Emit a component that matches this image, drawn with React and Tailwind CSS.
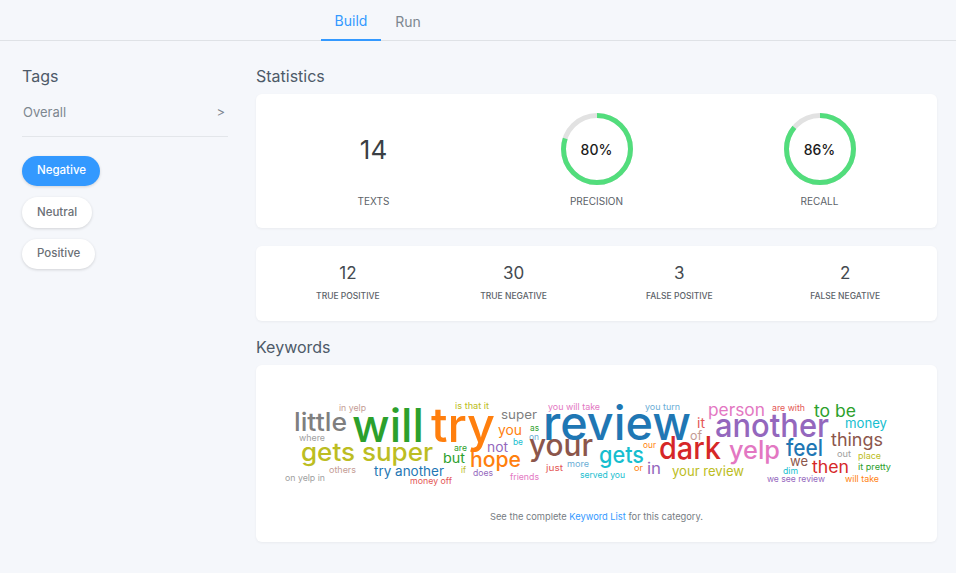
const WORDS = [
  ['little', 294, 431, 25, 53, '#7f7f7f'],
  ['will', 352, 442, 46, 72, '#2ca02c'],
  ['try', 431, 442, 48, 64, '#ff7f0e'],
  ['gets super', 301, 461, 25, 132, '#bcbd22'],
  ['in yelp', 339, 411, 9, 27, '#c49c94'],
  ['is that it', 455, 409, 9, 34, '#bcbd22'],
  ['super', 501, 419, 12.5, 36, '#7f7f7f'],
  ['where', 299, 441, 9, 26, '#a0a0a0'],
  ['you', 498, 435, 14, 24, '#ff7f0e'],
  ['as', 530, 431, 9, 9, '#2ca02c'],
  ['on', 529, 440, 9, 10, '#6baed6'],
  ['be', 513, 445, 9, 10, '#17becf'],
  ['not', 487, 452, 13, 21, '#9467bd'],
  ['are', 454, 451, 9, 13, '#2ca02c'],
  ['but', 443, 463, 13, 22, '#2ca02c'],
  ['hope', 470, 467, 21, 51, '#ff7f0e'],
  ['your', 529, 456, 30, 64, '#8c564b'],
  ['try another', 374, 476, 13, 70, '#1f77b4'],
  ['others', 329, 473, 9, 27, '#c49c94'],
  ['on yelp in', 285, 481, 9, 40, '#a0a0a0'],
  ['money off', 410, 484, 9, 42, '#e45756'],
  ['if', 461, 473, 9, 5, '#bcbd22'],
  ['does', 473, 476, 9, 20, '#9467bd'],
  ['friends', 510, 480, 9, 29, '#e377c2'],
  ['just', 546, 471, 9, 17, '#e45756'],
  ['more', 567, 467, 9, 22, '#6baed6'],
  ['you will take', 548, 410, 9, 52, '#e377c2'],
  ['review', 543, 440, 47, 148, '#1f77b4'],
  ['you turn', 645, 410, 9, 35, '#6baed6'],
  ['person', 708, 416, 17, 57, '#e377c2'],
  ['are with', 772, 411, 9, 33, '#e45756'],
  ['to be', 814, 417, 17, 42, '#2ca02c'],
  ['money', 845, 428, 13.5, 42, '#17becf'],
  ['it', 697, 428, 13, 8, '#e45756'],
  ['another', 715, 437, 33, 114, '#9467bd'],
  ['of', 690, 440, 12, 12, '#c49c94'],
  ['things', 831, 446, 18, 52, '#8c564b'],
  ['our', 643, 448, 9, 13, '#ff7f0e'],
  ['gets', 599, 463, 23, 45, '#17becf'],
  ['dark', 659, 459, 31, 62, '#d62728'],
  ['yelp', 729, 459, 25, 51, '#e377c2'],
  ['feel', 786, 456, 23, 37, '#1f77b4'],
  ['out', 837, 457, 9, 14, '#a0a0a0'],
  ['place', 858, 459, 9, 23, '#bcbd22'],
  ['we', 790, 466, 13, 18, '#8c564b'],
  ['then', 812, 473, 17, 37, '#d62728'],
  ['it pretty', 858, 470, 9, 33, '#2ca02c'],
  ['or', 634, 471, 9, 9, '#ff7f0e'],
  ['in', 647, 474, 16, 14, '#9467bd'],
  ['your review', 672, 476, 13, 72, '#bcbd22'],
  ['dim', 783, 474, 9, 15, '#17becf'],
  ['served you', 580, 478, 9, 45, '#17becf'],
  ['we see review', 767, 482, 9, 58, '#9467bd'],
  ['will take', 845, 482, 9, 34, '#ff7f0e'],
]

function Ring({ value }) {
  const r = 33.5
  const c = 2 * Math.PI * r
  return (
    <div className="relative w-[72px] h-[72px]">
      <svg width="72" height="72" viewBox="0 0 72 72" className="-rotate-90">
        <circle cx="36" cy="36" r={r} fill="none" stroke="#e2e2e2" strokeWidth="5" />
        <circle cx="36" cy="36" r={r} fill="none" stroke="#52dd7c" strokeWidth="5" strokeDasharray={`${c * value / 100} ${c}`} />
      </svg>
      <div className="absolute inset-0 flex items-center justify-center text-[14px] font-medium text-[#1a1a1a]">{value}%</div>
    </div>
  )
}

function Count({ value, label }) {
  return (
    <div className="flex flex-col items-center -mt-[2px]">
      <div className="text-[17px] leading-[20px] text-[#444a50]">{value}</div>
      <div className="mt-[7px] text-[8.5px] leading-[12px] font-medium text-[#5c6268]">{label}</div>
    </div>
  )
}

export default function App() {
  return (
    <div className="w-[956px] h-[573px] overflow-hidden bg-[#f5f7fb] font-['Inter',sans-serif]">
      {/* Tabs */}
      <div className="h-[41px] border-b border-[#dfe2e6] flex pl-[321px]">
        <div className="w-[60px] h-[41px] pt-[2px] border-b-2 border-[#3399ff] text-[#3399ff] text-[14px] flex items-center justify-center">Build</div>
        <div className="w-[54px] h-[41px] pt-[2px] text-[#7d8790] text-[14px] flex items-center justify-center">Run</div>
      </div>

      <div className="flex pl-[22px] pt-[24px]">
        {/* Sidebar */}
        <div className="w-[206px] mr-[28px]">
          <div className="text-[16px] leading-[22px] text-[#4d5a68]">Tags</div>
          <div className="mt-[15px] pb-[14px] border-b border-[#e3e6ea] flex items-center justify-between pl-[1px] pr-[3px] text-[13px] leading-[20px] text-[#7d8790]">
            <span>Overall</span>
            <span>&gt;</span>
          </div>
          <div className="mt-[19px] flex flex-col items-start">
            <button className="w-[78px] h-[30px] pl-[15px] text-left rounded-full bg-[#3399ff] text-white text-[11.5px] font-medium shadow-[0_1px_3px_rgba(0,0,0,0.15)]">Negative</button>
            <button className="mt-[11px] w-[70px] h-[31px] pl-[15px] text-left rounded-full bg-white text-[#6b7076] text-[11.5px] font-medium shadow-[0_1px_3px_rgba(0,0,0,0.15)]">Neutral</button>
            <button className="mt-[11px] w-[73px] h-[30px] pl-[15px] text-left rounded-full bg-white text-[#6b7076] text-[11.5px] font-medium shadow-[0_1px_3px_rgba(0,0,0,0.15)]">Positive</button>
          </div>
        </div>

        {/* Main column */}
        <div className="w-[681px]">
          <div className="text-[16px] leading-[22px] text-[#4d5a68]">Statistics</div>
          <div className="mt-[7px] h-[134px] bg-white rounded-md shadow-[0_1px_3px_rgba(0,0,0,0.05)] grid grid-cols-3 px-[6px]">
            <div className="flex flex-col items-center pt-[19px]">
              <div className="h-[72px] flex items-center text-[26px] text-[#3a3f44]">14</div>
              <div className="mt-[9px] text-[10px] leading-[14px] text-[#5c6268]">TEXTS</div>
            </div>
            <div className="flex flex-col items-center pt-[19px]">
              <Ring value={80} />
              <div className="mt-[9px] text-[10px] leading-[14px] text-[#5c6268]">PRECISION</div>
            </div>
            <div className="flex flex-col items-center pt-[19px]">
              <Ring value={86} />
              <div className="mt-[9px] text-[10px] leading-[14px] text-[#5c6268]">RECALL</div>
            </div>
          </div>

          <div className="mt-[18px] h-[75px] px-[9px] bg-white rounded-md shadow-[0_1px_3px_rgba(0,0,0,0.05)] grid grid-cols-4 items-center">
            <Count value="12" label="TRUE POSITIVE" />
            <Count value="30" label="TRUE NEGATIVE" />
            <Count value="3" label="FALSE POSITIVE" />
            <Count value="2" label="FALSE NEGATIVE" />
          </div>

          <div className="mt-[15px] text-[16px] leading-[22px] text-[#4d5a68]">Keywords</div>
          <div className="mt-[7px] h-[177px] bg-white rounded-md shadow-[0_1px_3px_rgba(0,0,0,0.05)] flex flex-col items-center">
            <svg width="681" height="145" viewBox="256 365 681 145">
              {WORDS.map(([word, x, y, size, width, color]) => (
                <text key={word + x} x={x} y={y} fontSize={size} fontWeight={size >= 20 ? 500 : 400} fill={color} textLength={width} lengthAdjust="spacingAndGlyphs">{word}</text>
              ))}
            </svg>
            <div className="text-[9.3px] leading-[14px] text-[#777d83]">
              See the complete <span className="text-[#3399ff]">Keyword List</span> for this category.
            </div>
          </div>
        </div>
      </div>
    </div>
  )
}
